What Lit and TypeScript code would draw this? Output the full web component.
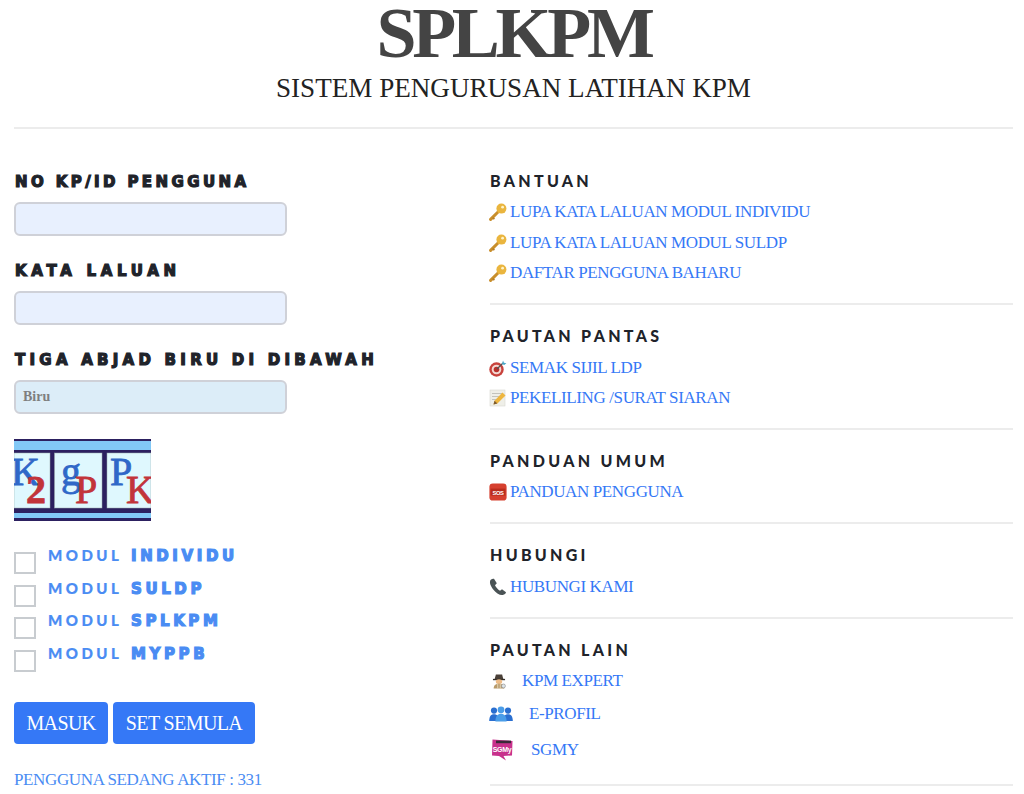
import { LitElement, html, css, svg } from "lit";
import { customElement } from "lit/decorators.js";

const key = html`<svg class="ic" viewBox="0 0 18 18"><path d="M1.6 16.4 L9 9" stroke="#c98f2c" stroke-width="3" stroke-linecap="round"/><path d="M3.6 14.6l1.8 1.6" stroke="#b87f25" stroke-width="1.8"/><circle cx="12.4" cy="5.6" r="5" fill="#eab53e"/><circle cx="13.6" cy="4.2" r="1.4" fill="#fff3c8"/></svg>`;
const target = html`<svg class="ic" viewBox="0 0 18 18"><circle cx="7.5" cy="10.5" r="7.2" fill="#c8423c"/><circle cx="7.5" cy="10.5" r="4.8" fill="#f3d8d2"/><circle cx="7.5" cy="10.5" r="2.8" fill="#b8302c"/><path d="M8 10 L14 4" stroke="#555" stroke-width="1.3"/><path d="M13 5l1-3.4 1 2.2 2.4.5-2.2 1.7z" fill="#4aa8c8"/></svg>`;
const memo = html`<svg class="ic" viewBox="0 0 18 18"><rect x="1" y="1" width="15" height="16" fill="#efefe8" stroke="#d8d8d0" stroke-width=".6"/><path d="M3 4.5h10M3 7.5h8M3 10.5h5" stroke="#b8b8b0" stroke-width=".8"/><path d="M4.5 15.5l1-3.8L13.5 3.6l3 3L8.4 14.6z" fill="#eeb63e"/><path d="M4.5 15.5l1-3.8 2.9 2.9z" fill="#7a5a30"/></svg>`;
const sos = html`<svg class="ic" viewBox="0 0 18 18"><rect x=".4" y=".4" width="17.2" height="17.2" rx="3.4" fill="#d6402f"/><rect x="1.6" y="5.6" width="14.8" height="7" fill="#b92c1c"/><text x="9" y="11.6" text-anchor="middle" class="sos">SOS</text></svg>`;
const phone = html`<svg class="ic" viewBox="0 0 18 18"><path d="M1.8 1.8 C.4 3.2 .6 6.6 3.8 11 C7 15.4 11.2 17.6 13.8 17 C15.6 16.6 16.8 15.4 17 14.2 L13 11.2 L11 12.8 C9 11.6 6.8 9 6 7.2 L7.8 5.2 L5 .8 C3.8 .6 2.8 .9 1.8 1.8 Z" fill="#4a5355"/></svg>`;
const spy = html`<svg class="ic spy" viewBox="0 0 18 18"><path d="M4 7.2 L5.5 1.6 L12.5 1.6 L14 7.2Z" fill="#4a4038"/><rect x="2.2" y="6.6" width="13.6" height="1.5" fill="#332c26"/><ellipse cx="9" cy="9.8" rx="3.6" ry="2.8" fill="#eebc88"/><path d="M3 17.5 C3 13 6 12 9 12 C12 12 15 13 15 17.5Z" fill="#b89a6a"/><path d="M7.6 12v5.5M10.4 12v5.5" stroke="#e8dcc0" stroke-width="1"/><circle cx="14" cy="14.6" r="2.2" fill="#dfe6ea" stroke="#8a8a8a" stroke-width=".7"/></svg>`;
const people = html`<svg class="ic2 ppl" viewBox="0 0 24 18"><circle cx="5" cy="5.6" r="3.1" fill="#2a6fd0"/><circle cx="19" cy="5.6" r="3.1" fill="#2a6fd0"/><path d="M0.2 16 C0.2 10.6 2.5 9.2 5 9.2 C7.5 9.2 9.8 10.6 9.8 16Z" fill="#2a6fd0"/><path d="M14.2 16 C14.2 10.6 16.5 9.2 19 9.2 C21.5 9.2 23.8 10.6 23.8 16Z" fill="#2a6fd0"/><circle cx="12" cy="4.8" r="3.4" fill="#4a9de8"/><path d="M6.4 16.6 C6.4 10.6 9 8.8 12 8.8 C15 8.8 17.6 10.6 17.6 16.6Z" fill="#4a9de8"/></svg>`;
const sgmy = html`<svg class="ic2 sgi" viewBox="0 0 22 22"><path d="M1.5 .6 L21.5 2 L21 16.5 L12.5 17 L15 21.4 L8 17 L1 16.5 Z" fill="#c8318c"/><rect x="5" y="1.6" width="15" height="2.6" fill="#3a2a38"/><text x="11" y="13" text-anchor="middle" class="sg">SGMy</text></svg>`;

@customElement("app-root")
export class AppRoot extends LitElement {
  static styles = css`
    :host { display: block; font-family: "Liberation Serif", "Times New Roman", serif; color: #222; background: #fff; height: 794px; overflow: hidden; }
    .page { padding: 0 11px 0 14px; }
    header { text-align: center; height: 127px; box-sizing: border-box; }
    h1 { margin: 0; font-size: 72px; line-height: 66px; letter-spacing: -4.3px; font-weight: 700; color: #444; }
    h2 { margin: 0; padding-top: 5px; font-size: 27.1px; line-height: 34px; font-weight: 400; color: #222; }
    .rule { height: 2px; background: #ececec; border: 0; margin: 0; }
    .cols { display: grid; grid-template-columns: 476px 1fr; }
    .left { padding-top: 43px; }
    .label { font-family: "DejaVu Sans", sans-serif; font-weight: 700; font-size: 15px; line-height: 20px; color: #20232a; -webkit-text-stroke: 1.2px #20232a; white-space: nowrap; padding-left: 1px; }
    .s1 { letter-spacing: 3.4px; } .s2 { letter-spacing: 4.7px; } .s3 { letter-spacing: 4.25px; }
    .field { display: block; box-sizing: border-box; width: 273px; height: 34px; margin: 10px 0 25px; border: 2px solid #cfd1d8; border-radius: 6px; background: #e8f0fe; font: 700 14px "Liberation Serif", serif; color: #7f7f7f; padding: 0 7px; line-height: 30px; }
    .captcha-f { background: #dcedf8; margin-bottom: 25px; }
    .captcha { display: block; width: 137px; height: 82px; }
    .captcha text { font-family: "Liberation Serif", serif; stroke-width: .8; }
    .mods { margin-top: 31px; display: flex; flex-direction: column; gap: 10.7px; }
    .mod { display: flex; gap: 12px; height: 22px; }
    .box { width: 22px; height: 22px; box-sizing: border-box; border: 2px solid #c8ccd0; background: #fff; flex: none; }
    .mod span { font-family: "Lato", sans-serif; color: #4a8cf3; font-size: 15px; font-weight: 900; letter-spacing: 3.5px; line-height: 14px; margin-top: -4px; -webkit-text-stroke: .2px #4a8cf3; white-space: nowrap; }
    .mod b { font-family: "DejaVu Sans", sans-serif; font-size: 15px; letter-spacing: 3.6px; -webkit-text-stroke: 1.2px #4a8cf3; margin-left: 2px; }
    .btns { display: flex; gap: 5px; margin-top: 30px; }
    .btn { height: 42px; border-radius: 4px; background: #3578f6; color: #fff; font-size: 20px; line-height: 42px; text-align: center; letter-spacing: -.6px; }
    .b1 { width: 94px; } .b2 { width: 142px; }
    .active { margin-top: 26px; font-size: 17px; line-height: 20px; color: #4a8cf3; white-space: nowrap; letter-spacing: -.37px; }
    .right { padding-top: 42px; }
    .sec { padding-bottom: 14.8px; border-bottom: 2px solid #ececec; margin-bottom: 21px; }
    .last { padding-bottom: 16px; }
    .sec h3 { margin: 0 0 6px; font-family: "Lato", sans-serif; font-weight: 900; font-size: 16px; line-height: 20px; letter-spacing: 3.3px; color: #20232a; }
    .link { display: flex; align-items: center; height: 30.5px; font-size: 17px; color: #3578f6; gap: 3px; white-space: nowrap; letter-spacing: -.38px; }
    .ic { width: 18px; height: 18px; flex: none; margin-left: -1px; }
    .ic.spy { margin: 0 12px 0 1px; width: 16px; height: 18px; }
    .ic2 { flex: none; }
    .ppl { width: 24px; height: 18px; margin: 0 13px 0 -1px; }
    .sgi { width: 22px; height: 22px; margin: 0 15px 0 1px; }
    .sos { font: 700 5.8px "Liberation Sans", sans-serif; fill: #fff; }
    .sg { font: 700 7px "Liberation Sans", sans-serif; fill: #fff; }
    .l1 { height: 30px; } .l2 { height: 36px; } .l3 { height: 36px; }
  `;

  private link(icon: unknown, text: string, cls = "") {
    return html`<div class="link ${cls}">${icon}<span>${text}</span></div>`;
  }

  private captcha() {
    return html`<svg class="captcha" viewBox="0 0 137 82">
      <rect width="137" height="82" fill="#2c2060"/>
      <rect y="2" width="137" height="9" fill="#82c8f6"/>
      <rect y="74" width="137" height="5" fill="#82c8f6"/>
      ${[[0, 36], [40.5, 47.5], [93, 44]].map(([x, w]) => svg`<rect x="${x}" y="14" width="${w}" height="55" fill="#dff8fe" stroke="#9aa" stroke-width=".5"/>`)}
      <text x="-3" y="46" font-size="40" fill="#2f68c8" stroke="#2f68c8">K</text>
      <text x="12" y="64" font-size="40" font-weight="700" fill="#c2343a" stroke="#c2343a">2</text>
      <text x="47" y="46" font-size="40" fill="#2f68c8" stroke="#2f68c8">g</text>
      <text x="61" y="64" font-size="40" fill="#c2343a" stroke="#c2343a">P</text>
      <text x="96" y="46" font-size="40" fill="#2f68c8" stroke="#2f68c8">P</text>
      <text x="112" y="64" font-size="40" fill="#c2343a" stroke="#c2343a">K</text>
    </svg>`;
  }

  render() {
    return html`<div class="page">
      <header><h1>SPLKPM</h1><h2>SISTEM PENGURUSAN LATIHAN KPM</h2></header>
      <div class="rule"></div>
      <div class="cols">
        <div class="left">
          <div class="label s1">NO KP/ID PENGGUNA</div>
          <div class="field"></div>
          <div class="label s2">KATA LALUAN</div>
          <div class="field"></div>
          <div class="label s3">TIGA ABJAD BIRU DI DIBAWAH</div>
          <div class="field captcha-f">Biru</div>
          ${this.captcha()}
          <div class="mods">
            ${["INDIVIDU", "SULDP", "SPLKPM", "MYPPB"].map((m) => html`<div class="mod"><div class="box"></div><span>MODUL <b>${m}</b></span></div>`)}
          </div>
          <div class="btns"><div class="btn b1">MASUK</div><div class="btn b2">SET SEMULA</div></div>
          <div class="active">PENGGUNA SEDANG AKTIF : 331</div>
        </div>
        <div class="right">
          <section class="sec"><h3>BANTUAN</h3>
            ${this.link(key, "LUPA KATA LALUAN MODUL INDIVIDU")}
            ${this.link(key, "LUPA KATA LALUAN MODUL SULDP")}
            ${this.link(key, "DAFTAR PENGGUNA BAHARU")}
          </section>
          <section class="sec"><h3>PAUTAN PANTAS</h3>
            ${this.link(target, "SEMAK SIJIL LDP")}
            ${this.link(memo, "PEKELILING /SURAT SIARAN")}
          </section>
          <section class="sec"><h3>PANDUAN UMUM</h3>
            ${this.link(sos, "PANDUAN PENGGUNA")}
          </section>
          <section class="sec"><h3>HUBUNGI</h3>
            ${this.link(phone, "HUBUNGI KAMI")}
          </section>
          <section class="sec last"><h3>PAUTAN LAIN</h3>
            ${this.link(spy, "KPM EXPERT", "l1")}
            ${this.link(people, "E-PROFIL", "l2")}
            ${this.link(sgmy, "SGMY", "l3")}
          </section>
        </div>
      </div>
    </div>`;
  }
}
